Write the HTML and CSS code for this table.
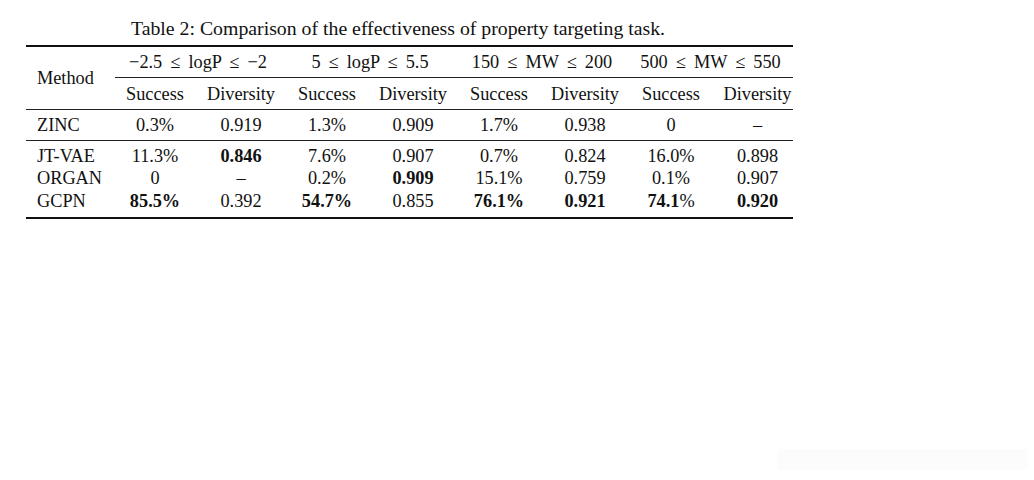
FILE: index.html
```html
<!DOCTYPE html>
<html>
<head>
<meta charset="utf-8">
<link rel="stylesheet" href="styles.css">
</head>
<body>
<div class="page">
  <div class="caption">Table 2: Comparison of the effectiveness of property targeting task.</div>
  <div class="tbl">
    <div class="rule thick"></div>
    <div class="method">Method</div>
    <div class="group">−2.5 ≤ logP ≤ −2</div>
    <div class="group">5 ≤ logP ≤ 5.5</div>
    <div class="group">150 ≤ MW ≤ 200</div>
    <div class="group">500 ≤ MW ≤ 550</div>
    <div class="cmid"></div>
    <div class="sub">Success</div><div class="sub">Diversity</div>
    <div class="sub">Success</div><div class="sub">Diversity</div>
    <div class="sub">Success</div><div class="sub">Diversity</div>
    <div class="sub">Success</div><div class="sub last-col">Diversity</div>
    <div class="rule"></div>
    <div class="zinc name">ZINC</div>
    <div class="zinc">0.3%</div><div class="zinc">0.919</div>
    <div class="zinc">1.3%</div><div class="zinc">0.909</div>
    <div class="zinc">1.7%</div><div class="zinc">0.938</div>
    <div class="zinc">0</div><div class="zinc last-col">–</div>
    <div class="rule"></div>
    <div class="c r1 name">JT-VAE</div>
    <div class="c r1">11.3%</div><div class="c r1"><b>0.846</b></div>
    <div class="c r1">7.6%</div><div class="c r1">0.907</div>
    <div class="c r1">0.7%</div><div class="c r1">0.824</div>
    <div class="c r1">16.0%</div><div class="c r1 last-col">0.898</div>
    <div class="c name">ORGAN</div>
    <div class="c">0</div><div class="c">–</div>
    <div class="c">0.2%</div><div class="c"><b>0.909</b></div>
    <div class="c">15.1%</div><div class="c">0.759</div>
    <div class="c">0.1%</div><div class="c last-col">0.907</div>
    <div class="c r3 name">GCPN</div>
    <div class="c r3"><b>85.5%</b></div><div class="c r3">0.392</div>
    <div class="c r3"><b>54.7%</b></div><div class="c r3">0.855</div>
    <div class="c r3"><b>76.1%</b></div><div class="c r3"><b>0.921</b></div>
    <div class="c r3"><b>74.1</b>%</div><div class="c r3 last-col"><b>0.920</b></div>
    <div class="rule thick"></div>
  </div>
  <div class="ghost"></div>
</div>
</body>
</html>
```

FILE: styles.css
```css
html, body {
  margin: 0;
  padding: 0;
  background: #ffffff;
}
.page {
  font-family: "Liberation Serif", "Times New Roman", serif;
  font-size: 18.3px;
  color: #111111;
  padding-top: 16px;
}
.caption {
  margin-left: 131px;
  height: 22px;
  line-height: 24px;
  font-size: 19.8px;
  white-space: nowrap;
}
.tbl {
  margin-top: 7px;
  margin-left: 26px;
  width: 767px;
  display: grid;
  grid-template-columns: repeat(8, 86px) 79px;
  grid-template-rows: 2px 30px 1px 31px 1px 30px 1px;
}
.rule {
  grid-column: 1 / -1;
  height: 1px;
  background: #222;
}
.rule.thick {
  height: 2px;
  background: #111;
}
.method {
  grid-row: span 3;
  display: flex;
  align-items: center;
  padding-left: 11px;
}
.group {
  grid-column: span 2;
  display: flex;
  align-items: center;
  justify-content: center;
  white-space: nowrap;
  padding-top: 1px;
  word-spacing: 3.5px;
}
.cmid {
  grid-column: 2 / -1;
  margin-left: 3px;
  background: #222;
}
.sub, .zinc, .c {
  display: flex;
  align-items: center;
  justify-content: center;
  white-space: nowrap;
}
.sub { padding-top: 1px; }
.zinc { padding-top: 1px; }
.c {
  height: 22.5px;
}
.c.r1 {
  padding-top: 4px;
}
.c.r3 {
  padding-bottom: 4.5px;
}
.name {
  justify-content: flex-start;
  padding-left: 11px;
}
.last-col {
  padding-left: 8px;
}
b {
  font-weight: bold;
}
.ghost {
  margin-top: 230px;
  margin-left: 777px;
  width: 251px;
  height: 21px;
  background: #fcfcfc;
}
```
